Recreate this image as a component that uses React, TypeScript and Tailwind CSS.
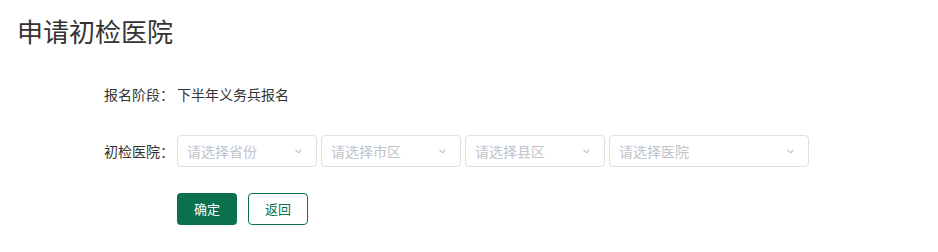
import { ChevronDown } from 'lucide-react';

const font = { fontFamily: '"Microsoft YaHei", "Noto Sans CJK SC", sans-serif' };

function SelectBox({ placeholder, width }: { placeholder: string; width: string }) {
  return (
    <div
      className={`${width} h-[32px] border border-[#dcdfe6] rounded-[4px] bg-white flex items-center justify-between pl-[9px] pr-[12px]`}
    >
      <span className="text-[14px] text-[#c0c4cc]">{placeholder}</span>
      <ChevronDown size={11} strokeWidth={2} className="text-[#909399]" />
    </div>
  );
}

export default function App() {
  return (
    <div className="w-[938px] h-[252px] bg-white text-[#333]" style={font}>
      <h1 className="pl-[17px] pt-[13px] text-[26px] leading-[36px] text-[#333]">申请初检医院</h1>

      <div className="mt-[31px]">
        <div className="flex items-center h-[28px]">
          <label className="w-[177px] pr-[3px] text-right text-[14px]">报名阶段：</label>
          <span className="text-[14px]">下半年义务兵报名</span>
        </div>

        <div className="flex items-center mt-[27px]">
          <label className="w-[177px] pr-[3px] text-right text-[14px]">初检医院：</label>
          <div className="flex gap-[4px]">
            <SelectBox placeholder="请选择省份" width="w-[140px]" />
            <SelectBox placeholder="请选择市区" width="w-[140px]" />
            <SelectBox placeholder="请选择县区" width="w-[140px]" />
            <SelectBox placeholder="请选择医院" width="w-[200px]" />
          </div>
        </div>

        <div className="flex gap-[11px] pl-[177px] mt-[26px]">
          <button className="w-[60px] h-[32px] rounded-[4px] bg-[#0b7050] text-white text-[13px]">确定</button>
          <button className="w-[60px] h-[32px] rounded-[4px] border border-[#0b7050] text-[#0b7050] bg-white text-[13px]">返回</button>
        </div>
      </div>
    </div>
  );
}
